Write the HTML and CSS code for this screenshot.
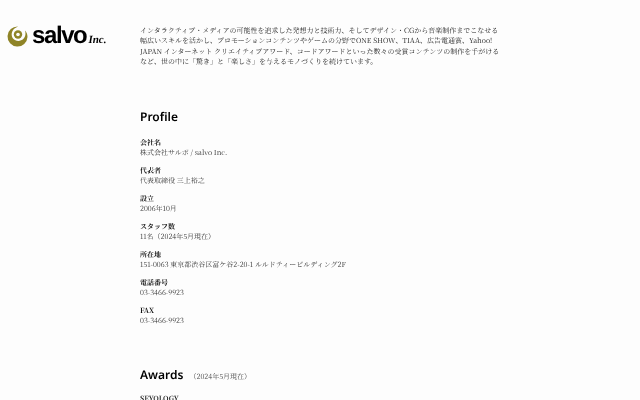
FILE: index.html
```html
<!DOCTYPE HTML><html lang="ja">
<head>
  <title>salvo Inc.</title>
  <meta name="viewport" content="width=device-width, initial-scale=1">
  <meta charset="UTF-8">
  <link rel="stylesheet" href="styles.css">
</head>
<body>
  <div class="page">
    <div class="logo">
      <svg class="logo-mark" width="22" height="22" viewBox="0 0 22 22">
        <path d="M11 1.5 A10 10 0 1 0 20.5 12 C20.5 9 19.5 7 18 5.5 C19 8.5 18.5 11.5 16.5 13.8 C13.5 16.8 8.5 16.5 6 13.5 C3.8 10.5 4.5 6 7.5 3.6 C8.5 2.8 9.8 2 11 1.5 Z" fill="#8f8427"/>
        <circle cx="11" cy="9.5" r="4.2" fill="#8f8427"/>
        <circle cx="11" cy="9.5" r="1.8" fill="#fdfdfd"/>
      </svg>
      <span class="logo-name">salvo</span><span class="logo-inc">Inc.</span>
    </div>
    <div class="main">
      <p class="intro">インタラクティブ・メディアの可能性を追求した発想力と技術力、そしてデザイン・CGから音楽制作までこなせる<br>幅広いスキルを活かし、プロモーションコンテンツやゲームの分野でONE SHOW、TIAA、広告電通賞、Yahoo!<br>JAPAN インターネット クリエイティブアワード、コードアワードといった数々の受賞コンテンツの制作を手がける<br>など、世の中に「驚き」と「楽しさ」を与えるモノづくりを続けています。</p>

      <h2 class="title title-profile">Profile</h2>
      <dl class="profile">
        <dt>会社名</dt>
        <dd>株式会社サルボ / salvo Inc.</dd>
        <dt>代表者</dt>
        <dd>代表取締役 三上裕之</dd>
        <dt>設立</dt>
        <dd>2006年10月</dd>
        <dt>スタッフ数</dt>
        <dd>11名（2024年5月現在）</dd>
        <dt>所在地</dt>
        <dd>151-0063 東京都渋谷区富ケ谷2-20-1 ルルドティービルディング2F</dd>
        <dt>電話番号</dt>
        <dd>03-3466-9923</dd>
        <dt>FAX</dt>
        <dd>03-3466-9923</dd>
      </dl>

      <h2 class="title title-awards">Awards <small>（2024年5月現在）</small></h2>
      <h3 class="award-name">SEYOLOGY</h3>
    </div>
  </div>
</body>
</html>
```

FILE: styles.css
```css
html {overflow: hidden;}
body {margin: 0; background-color: #fdfdfd; color: #222; font-family: "Noto Serif CJK JP", "Liberation Serif", "Noto Sans CJK JP", serif; font-size: 7px; text-rendering: geometricPrecision;}

.page {display: flex; align-items: flex-start; will-change: transform;}

.logo {display: flex; align-items: center; width: 140px; flex-shrink: 0; padding: 25px 0 0 7px; box-sizing: border-box; color: #000;}
.logo-mark {flex-shrink: 0;}
.logo-name {font-family: "Liberation Sans", sans-serif; font-weight: bold; font-size: 24px; line-height: 22px; letter-spacing: -1.4px; margin-left: 3px;}
.logo-inc {font-family: "Liberation Serif", serif; font-weight: bold; font-style: italic; font-size: 11px; margin: 7px 0 0 2px;}

.main {width: 360px; padding-top: 26px;}

.intro {margin: 0; line-height: 10.4px; white-space: nowrap;}

.title {margin: 0; font-family: "Noto Sans", sans-serif; font-weight: 600; font-size: 12px; line-height: 20px; color: #000;}
.title small {font-family: "Noto Serif CJK JP", "Liberation Serif", "Noto Sans CJK JP", serif; font-weight: normal; font-size: 7px; color: #444; margin-left: 3px;}
.title-profile {margin-top: 39px;}
.title-awards {margin-top: 39px;}

.profile {margin: 11px 0 0;}
.profile dt {font-weight: bold; line-height: 10px; color: #111;}
.profile dd {margin: 0 0 8px; line-height: 10px; color: #333;}

.award-name {margin: 7px 0 0; font-size: 7px; line-height: 10px; font-weight: bold;}
```
